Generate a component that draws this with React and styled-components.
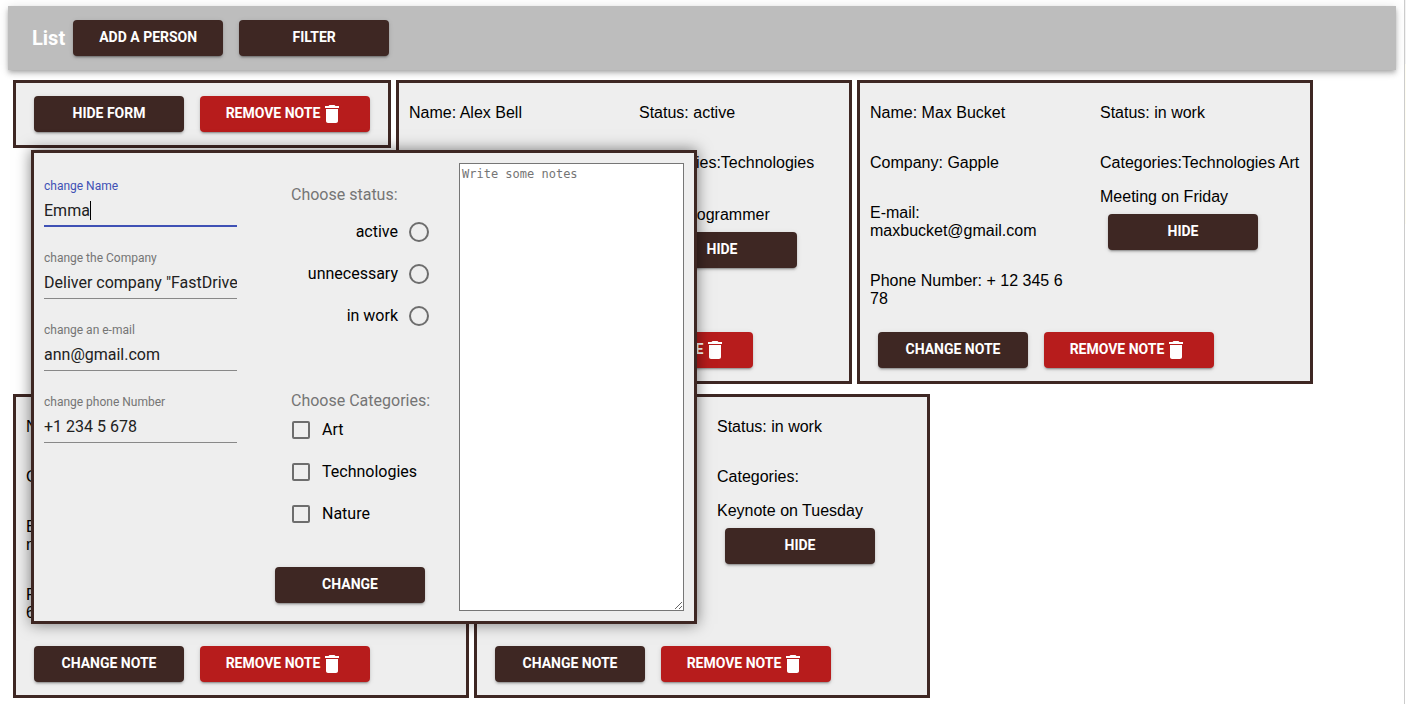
import React, { useEffect, useRef } from "react";
import styled, { createGlobalStyle, css } from "styled-components";

const color = {
  brown: "#3e2723",
  red: "#b71c1c",
  panel: "#eeeeee",
  bar: "#bdbdbd",
  primary: "#3f51b5",
  hint: "#757575",
  control: "#6d6d6d",
};

const roboto = `Roboto, "Liberation Sans", sans-serif`;
const arial = `"Liberation Sans", Arial, sans-serif`;

const GlobalStyle = createGlobalStyle`
  *, *::before, *::after { box-sizing: border-box; }
  html, body { margin: 0; background: #fff; }
  body { font: 16px/18px ${arial}; color: #000; }
`;

const Shell = styled.div`
  display: flex;
  min-height: 100vh;
`;

const Page = styled.main`
  flex: 1;
  min-width: 0;
  padding: 6px 8px;
`;

const Edge = styled.div`
  width: 2px;
  background: linear-gradient(#f3f3f3 64px, #fffdf2 64px 224px, #ffffff 224px);
  border-left: 1px solid #cccccc;
`;

const AppBar = styled.header`
  display: flex;
  align-items: center;
  min-height: 64px;
  padding: 0 24px;
  background: ${color.bar};
  box-shadow: 0 2px 4px -1px rgba(0, 0, 0, 0.2), 0 4px 5px rgba(0, 0, 0, 0.14),
    0 1px 10px rgba(0, 0, 0, 0.12);
`;

const Title = styled.h1`
  margin: 0;
  color: #fff;
  font: 700 20px/32px ${roboto};
`;

const Button = styled.button`
  display: inline-flex;
  align-items: center;
  justify-content: center;
  min-width: ${(p) => (p.$danger ? 170 : 150)}px;
  height: 36px;
  margin: 8px;
  padding: 0 16px 2px;
  border: 0;
  border-radius: 4px;
  background: ${(p) => (p.$danger ? color.red : color.brown)};
  color: #fff;
  font: 700 14px/24px ${roboto};
  text-transform: uppercase;
  white-space: nowrap;
  cursor: pointer;
  box-shadow: 0 3px 1px -2px rgba(0, 0, 0, 0.2), 0 2px 2px rgba(0, 0, 0, 0.14),
    0 1px 5px rgba(0, 0, 0, 0.12);
`;

const Icon = styled.svg`
  width: 24px;
  height: 24px;
  margin-top: 2px;
  fill: currentColor;
`;

const Notes = styled.section`
  display: flex;
  flex-wrap: wrap;
  align-items: flex-start;
  gap: 10px 5px;
  padding: 10px 5px 0;
`;

const Card = styled.article`
  position: relative;
  padding: 5px 10px;
  border: 3px solid ${color.brown};
  background: ${color.panel};
`;

const Details = styled.div`
  display: grid;
  grid-template-columns: 200px 200px;
  column-gap: 30px;
`;

const Column = styled.div`
  display: flex;
  flex-direction: column;
  align-items: flex-start;
  gap: 32px;
  padding: 16px 0;
`;

const Line = styled.p`
  margin: 0;
  white-space: pre-line;
`;

const Category = styled.div`
  display: flex;
  flex-direction: column;
  align-items: flex-start;
  gap: 16px;
`;

const Actions = styled.div`
  display: flex;
`;

const Popup = styled.form`
  position: absolute;
  z-index: 2;
  top: calc(100% + 5px);
  left: 15px;
  display: grid;
  grid-template-columns: 193px 222px 225px;
  padding: 10px;
  border: 3px solid ${color.brown};
  background: ${color.panel};
  font-family: ${roboto};
  box-shadow: 0 0 14px rgba(0, 0, 0, 0.5);
`;

const Fields = styled.div`
  display: flex;
  flex-direction: column;
  gap: 24px;
  padding-top: 16px;
`;

const Field = styled.label`
  position: relative;
  display: flex;
  flex-direction: column;
  height: 48px;
  border-bottom: 1px solid #888888;
  color: ${color.hint};
  font-size: 12px;
  line-height: 14px;

  ${(p) =>
    p.$active &&
    css`
      border-bottom: 2px solid ${color.primary};
      color: ${color.primary};
    `}
`;

const Input = styled.input`
  width: 100%;
  height: 32px;
  padding: 2px 0 0;
  border: 0;
  outline: 0;
  background: none;
  caret-color: transparent;
  color: #212121;
  font: 16px/20px ${roboto};
`;

const Caret = styled.span`
  position: absolute;
  top: 22px;
  left: 46px;
  width: 1px;
  height: 19px;
  background: #000;
`;

const Options = styled.div`
  display: flex;
  flex-direction: column;
  align-items: flex-start;
  padding-left: 30px;
`;

const Group = styled.fieldset`
  min-width: 0;
  margin: ${(p) => (p.$first ? "24px 0 56px 24px" : "0 0 24px 24px")};
  padding: 0;
  border: 0;
`;

const Legend = styled.legend`
  padding: 0;
  color: ${color.hint};
  line-height: 16px;
`;

const RadioList = styled.div`
  display: flex;
  flex-direction: column;
  align-items: flex-end;
  width: 138px;
  padding-top: 8px;
`;

const Choice = styled.label`
  display: flex;
  align-items: center;
  gap: ${(p) => (p.$radio ? 11 : 12)}px;
  height: 42px;
`;

const Box = styled.input`
  appearance: none;
  width: ${(p) => (p.type === "radio" ? 20 : 18)}px;
  height: ${(p) => (p.type === "radio" ? 20 : 18)}px;
  margin: 0 0 0 ${(p) => (p.type === "radio" ? 0 : 1)}px;
  border: 2px solid ${color.control};
  border-radius: ${(p) => (p.type === "radio" ? "50%" : "2px")};

  &:checked {
    border-color: ${color.primary};
    background: ${color.primary};
  }
`;

const NoteText = styled.textarea`
  width: 100%;
  margin: 0;
  padding: 2px;
  border: 1px solid #767676;
  background: #fff;
  font: 12px/16px "DejaVu Sans Mono", monospace;

  &::placeholder {
    color: #757575;
  }
`;

const TrashIcon = () => (
  <Icon viewBox="0 0 24 24" aria-hidden="true">
    <path d="M6 19c0 1.100.9 2 2 2h8c1.100 0 2-.9 2-2V7H6v12zM19 4h-3.500l-1-1h-5l-1 1H5v2h14V4z" />
  </Icon>
);

const RemoveButton = () => (
  <Button type="button" $danger>
    Remove note
    <TrashIcon />
  </Button>
);

const people = [
  {
    name: "Alex Bell",
    company: "Google",
    email: "alexanderbell@gmail.com",
    phone: "+ 12 345 678",
    status: "active",
    categories: "Technologies",
    note: "Hired\njunior programmer",
  },
  {
    name: "Max Bucket",
    company: "Gapple",
    email: "maxbucket@gmail.com",
    phone: "+ 12 345 6 78",
    status: "in work",
    categories: "Technologies Art",
    note: "Meeting on Friday",
  },
  {
    name: "Mary Smith",
    company: "Nature",
    email: "marysmith@gmail.com",
    phone: "+ 12 345 678",
    status: "active",
    categories: "Nature",
    note: "Call on Monday",
  },
  {
    name: "John Brown",
    company: "Keynote",
    email: "johnbrown@gmail.com",
    phone: "+ 12 345 678",
    status: "in work",
    categories: "",
    note: "Keynote on Tuesday",
  },
];

const fields = [
  { label: "change Name", value: "Emma", active: true },
  { label: "change the Company", value: 'Deliver company "FastDriver"' },
  { label: "change an e-mail", value: "ann@gmail.com" },
  { label: "change phone Number", value: "+1 234 5 678" },
];

function PersonCard({ person }) {
  return (
    <Card>
      <Details>
        <Column>
          <Line>Name: {person.name}</Line>
          <Line>Company: {person.company}</Line>
          <Line>E-mail: {person.email}</Line>
          <Line>Phone Number: {person.phone}</Line>
        </Column>
        <Column>
          <Line>Status: {person.status}</Line>
          <Category>
            <Line>Categories:{person.categories}</Line>
            <div>
              <Line>{person.note}</Line>
              <Button type="button">Hide</Button>
            </div>
          </Category>
        </Column>
      </Details>
      <Actions>
        <Button type="button">Change note</Button>
        <RemoveButton />
      </Actions>
    </Card>
  );
}

function EditForm() {
  const nameRef = useRef(null);

  useEffect(() => {
    nameRef.current.focus({ preventScroll: true });
  }, []);

  return (
    <Popup onSubmit={(e) => e.preventDefault()}>
      <Fields>
        {fields.map((f) => (
          <Field key={f.label} $active={f.active}>
            {f.label}
            <Input ref={f.active ? nameRef : null} defaultValue={f.value} />
            {f.active && <Caret aria-hidden="true" />}
          </Field>
        ))}
      </Fields>
      <Options>
        <Group $first>
          <Legend>Choose status:</Legend>
          <RadioList>
            {["active", "unnecessary", "in work"].map((s) => (
              <Choice key={s} $radio>
                {s}
                <Box type="radio" name="status" value={s} />
              </Choice>
            ))}
          </RadioList>
        </Group>
        <Group>
          <Legend>Choose Categories:</Legend>
          {["Art", "Technologies", "Nature"].map((c) => (
            <Choice key={c}>
              <Box type="checkbox" name="category" value={c} />
              {c}
            </Choice>
          ))}
        </Group>
        <Button type="submit">Change</Button>
      </Options>
      <NoteText aria-label="Notes" placeholder="Write some notes" />
    </Popup>
  );
}

export default function App() {
  return (
    <>
      <GlobalStyle />
      <Shell>
        <Page>
          <AppBar>
            <Title>List</Title>
            <Button type="button">Add a person</Button>
            <Button type="button">Filter</Button>
          </AppBar>
          <Notes>
            <Card>
              <Actions>
                <Button type="button">Hide form</Button>
                <RemoveButton />
              </Actions>
              <EditForm />
            </Card>
            {people.map((p) => (
              <PersonCard key={p.name} person={p} />
            ))}
          </Notes>
        </Page>
        <Edge />
      </Shell>
    </>
  );
}
